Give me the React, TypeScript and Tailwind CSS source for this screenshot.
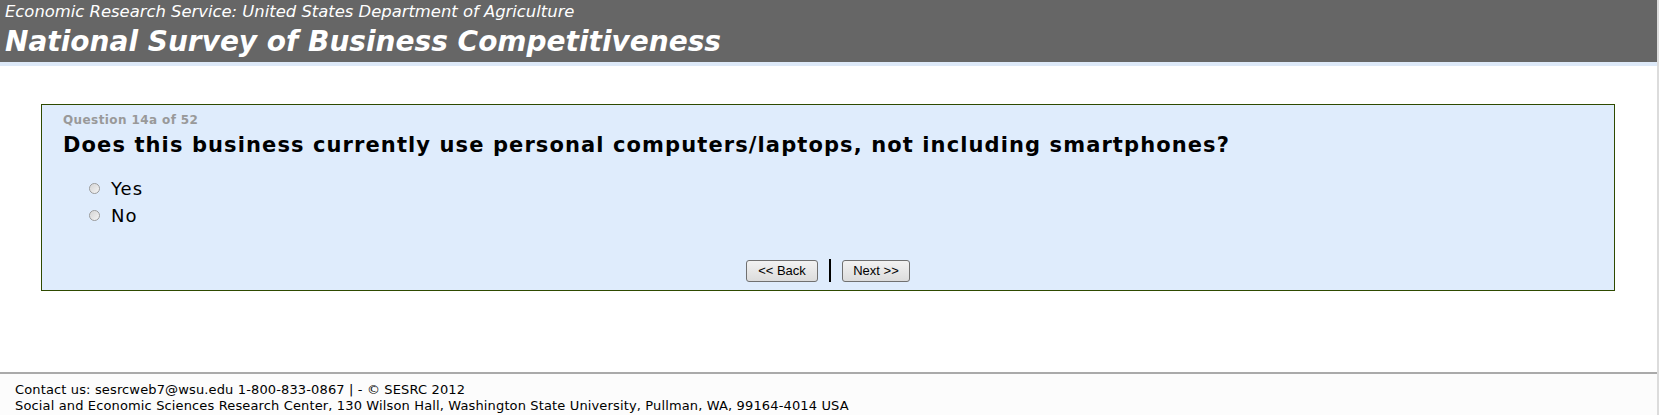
const options = ["Yes", "No"];

const Radio = () => (
    <span className="inline-block w-[11px] h-[11px] rounded-full border border-[#9a9a9a] bg-gradient-to-br from-[#d4d4d4] to-[#f4f4f4] shadow-[inset_0_0_1px_#fff]" />
);

const App = () => (
    <div className="flex w-[1659px] h-[415px] bg-white font-['DejaVu_Sans',Verdana,sans-serif]">
        <div className="flex flex-col flex-1">
            <div className="bg-[#666666] text-white pl-[5px] h-[62px]">
                <div className="text-[16.4px] italic leading-[23px]">
                    Economic Research Service: United States Department of Agriculture
                </div>
                <div className="text-[28px] italic font-bold leading-[37px]">
                    National Survey of Business Competitiveness
                </div>
            </div>
            <div className="h-[4px] bg-[#dde9f8]" />
            <div className="h-[306px] pt-[38px] pl-[41px] pr-[42px]">
                <div className="border border-[#2e4a00] bg-[#dfecfc] h-[187px] pl-[21px] pt-[7px]">
                    <div className="text-[12px] tracking-[0.4px] font-bold text-[#999999] leading-[16px]">
                        Question 14a of 52
                    </div>
                    <div className="text-[21px] tracking-[1.1px] font-bold text-black leading-[28px] mt-[3px]">
                        Does this business currently use personal computers/laptops, not including smartphones?
                    </div>
                    <div className="mt-[16px] pl-[26px]">
                        {options.map((item) => (
                            <label className="flex items-center h-[27px] text-[18px] tracking-[1px] text-black" key={item}>
                                <Radio />
                                <span className="ml-[11px]">{item}</span>
                            </label>
                        ))}
                    </div>
                    <div className="flex justify-center items-center gap-[11px] mt-[30px] pr-[21px] font-['Liberation_Sans',Arial,sans-serif]">
                        <button className="w-[72px] h-[22px] text-[13px] text-black border border-[#707070] rounded-[3px] bg-gradient-to-b from-[#f2f2f2] to-[#dcdcdc]">
                            &lt;&lt; Back
                        </button>
                        <span className="w-[2px] h-[23px] bg-black" />
                        <button className="w-[68px] h-[22px] text-[13px] text-black border border-[#707070] rounded-[3px] bg-gradient-to-b from-[#f2f2f2] to-[#dcdcdc]">
                            Next &gt;&gt;
                        </button>
                    </div>
                </div>
            </div>
            <div className="flex-1 border-t-2 border-[#aaaaaa] bg-[#fcfcfc] pl-[15px] pt-[8px] text-[13px] tracking-[0.14px] leading-[16px] text-black">
                <div>Contact us: sesrcweb7@wsu.edu 1-800-833-0867 | - © SESRC 2012</div>
                <div>Social and Economic Sciences Research Center, 130 Wilson Hall, Washington State University, Pullman, WA, 99164-4014 USA</div>
            </div>
        </div>
        <div className="w-[2px] bg-[#dcdcdc]" />
    </div>
);

export default App;
